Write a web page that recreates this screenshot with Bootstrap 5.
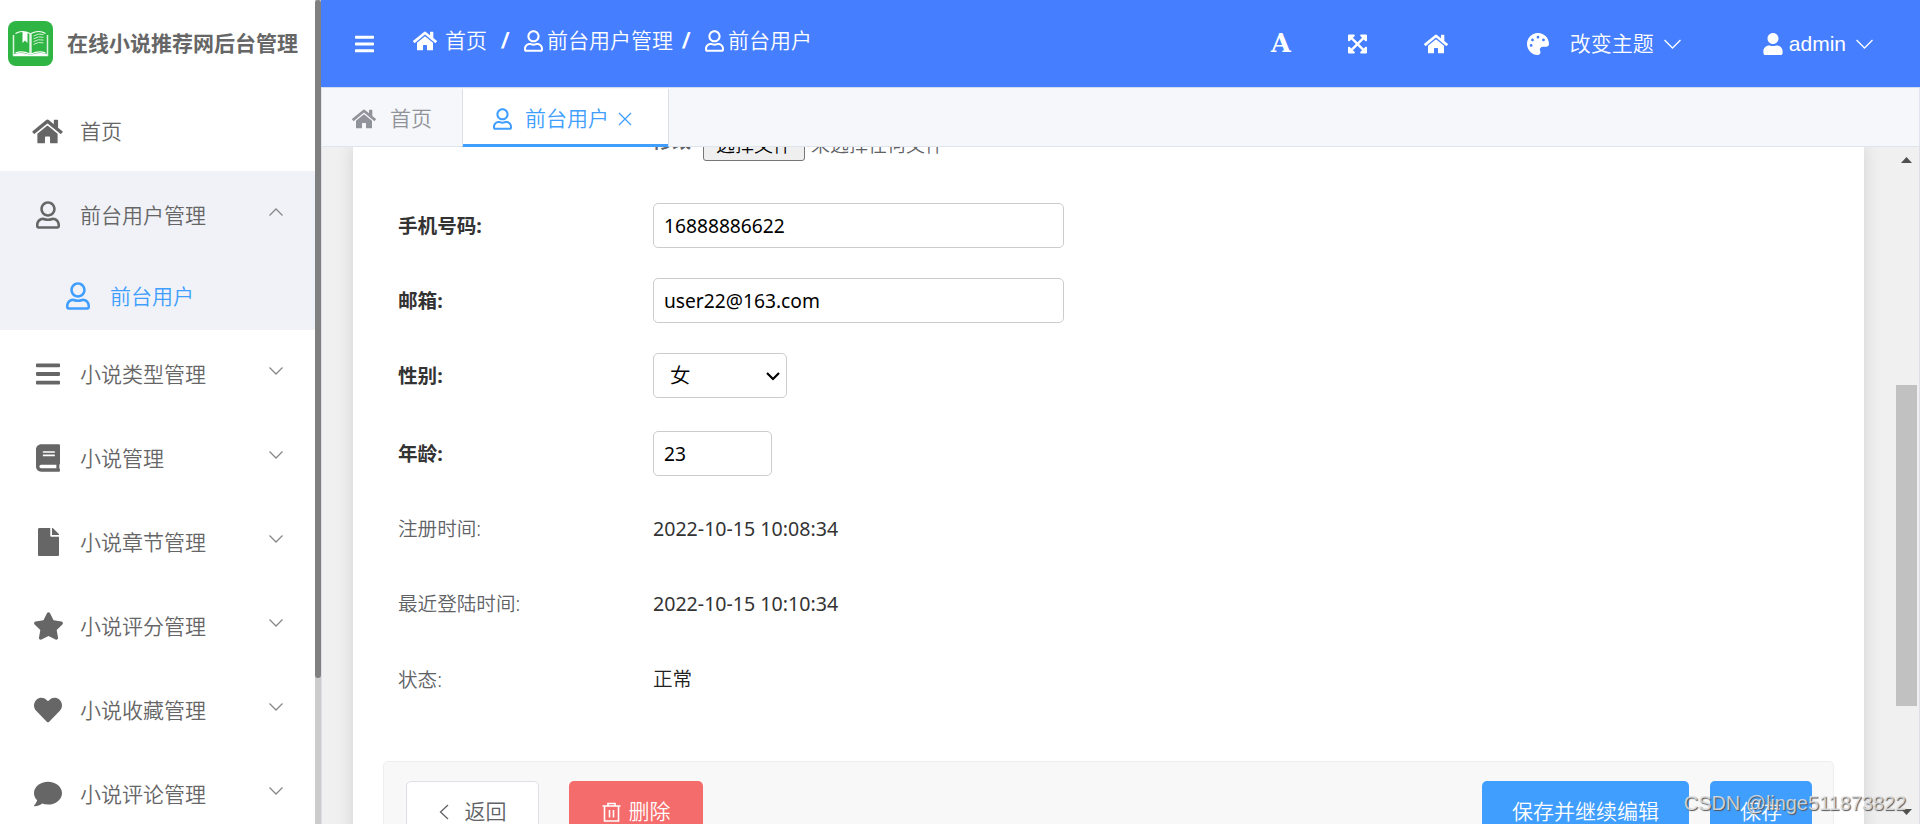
<!DOCTYPE html>
<html lang="zh-CN">
<head>
    <meta charset="UTF-8">
    <meta name="viewport" content="width=device-width, initial-scale=1">
    <title>在线小说推荐网后台管理</title>
    <link href="https://cdn.jsdelivr.net/npm/bootstrap@5.3.0/dist/css/bootstrap.min.css" rel="stylesheet">
    <style>
        body {
            font-family: "Noto Sans", "Noto Sans CJK SC", sans-serif;
            font-size: 21px;
            font-weight: 350;
            line-height: 1;
            color: #606266;
            background: #fff;
        }
        svg { display: block; flex: none; fill: currentColor; }
        .line-icon { fill: none; stroke: currentColor; stroke-width: 1.3; }

        /* Menú lateral */
        .sidebar { width: 315px; color: #666; }
        .brand { height: 87px; padding-left: 8px; gap: 14px; font-weight: 700; }
        .menu-item { height: 84px; padding: 4px 32px 0 32px; }
        .menu-item .menu-icon { width: 32px; margin-top: 0; margin-right: 16px; }
        .menu-item .line-icon { margin-top: -6px; color: #888; }
        .menu-open { background: #f0f2f7; }
        .menu-sub { height: 75px; padding: 7px 0 0 62px; color: #409eff; }
        .side-scroll { width: 6px; background: #ccc; }
        .side-thumb { height: 678px; background: #808080; border-radius: 3px; }

        /* Barra superior */
        .topbar { height: 87px; background: #457eff; color: #fff; padding: 0 47px 0 34px; }
        .crumbs { padding-bottom: 6px; margin-left: 39px; }
        .crumbs b { font-family: "Liberation Sans", sans-serif; font-weight: 700; font-size: 22px; width: 12px; text-align: center; transform: skewX(-10deg); }
        .crumb-first { margin: 0 13px 0 12px; }
        .crumb-next { margin: 0 13px 0 7px; }
        .letter-icon { font: 700 25.5px/1 "DejaVu Serif", serif; }
        .admin-name { font-family: "Liberation Sans", sans-serif; font-weight: 400; }
        .tool-gap { margin-left: 57px; }
        .theme-icon { margin: 0 21px 0 79px; }
        .caret { margin-left: 10px; }
        .admin-icon { margin: 0 6px 0 82px; }

        /* Pestañas */
        .tabbar { height: 60px; background: #f5f7fa; border: 1px solid #dfe4ed; border-top-color: #d3dcef; }
        .tab-home { width: 140px; padding: 3px 0 0 30px; gap: 14px; color: #909399; }
        .tab-active { width: 207px; padding: 2px 0 0 30px; background: #fff; color: #409eff; border: 1px solid #dcdfe6; border-width: 0 1px; box-shadow: inset 0 -2px #409eff; margin-bottom: -1px; border-bottom: 1px solid #409eff; margin-top: 1px; }
        .tab-active span { margin: 0 6px 0 13px; }

        /* Contenido */
        .content-area { background: #f0f0f0; border: 1px solid #dcdfe6; border-width: 0 1px; padding: 0 31px 0 31px; }
        .panel { width: 1511px; background: #fff; box-shadow: 0 0 16px rgba(0, 0, 0, .13); }
        .form-body { padding: 0 0 0 45px; font-size: 19.6px; }
        .form-line { height: 45px; margin-bottom: 30px; }
        .form-line label { width: 255px; padding-top: 1px; }
        .form-line label.strong { font-weight: 700; color: #333; }
        .form-line span { color: #333; font-weight: 400; }
        .form-line .form-control, .form-line .form-select {
            height: 45px; border: 1px solid #ccc; border-radius: 5px; font-size: 19.2px; color: #000; padding: 0 10px; font-weight: 400;
        }
        .form-line .w-text { width: 411px; }
        .form-line .w-age { width: 119px; }
        .form-line .form-select {
            width: 134px; padding-left: 16px; font-size: 20.5px; font-weight: 350;
            background-image: url("data:image/svg+xml,%3csvg xmlns='http://www.w3.org/2000/svg' viewBox='0 0 16 10'%3e%3cpath d='M2 2l6 6 6-6' fill='none' stroke='%23000' stroke-width='2.2'/%3e%3c/svg%3e");
            background-size: 16px 10px; background-position: right 5px center;
        }
        .form-line.mb-sex { margin-bottom: 33px; }
        .form-line.line-status { height: 105px; padding-top: 13px; margin-bottom: 0; }
        .form-line .state-text { font-weight: 350; color: #222; }
        .file-line { height: 14px; padding-left: 255px; margin-bottom: 42px; overflow: hidden; font-size: 19px; }
        .file-btn { height: 32px; width: 102px; line-height: 31px; background: #efefef; border: 1px solid #767676; border-radius: 3px; color: #000; text-align: center; }
        .file-edit { width: 50px; padding-bottom: 10px; flex: none; font-weight: 700; }
        .file-none { margin-left: 6px; padding-bottom: 6px; }
        .actions { width: 1451px; height: 100px; margin-left: 30px; background: #f8f8f8; border: 1px solid #eee; border-radius: 5px; padding: 19px 21px 0 22px; }
        .actions .btn { height: 61px; border-radius: 5px; font-size: 21px; font-weight: 350; line-height: 1; padding: 0; }
        .btn-back { width: 133px; background: #fff; border-color: #dcdfe6; color: #606266; }
        .btn-del { width: 134px; background: #f56c6c; color: #fff; margin-left: 30px; }
        .btn-save { background: #409eff; color: #fff; }
        .w-continue { width: 207px; margin-right: 21px; }
        .w-save { width: 102px; }

        /* Barra de desplazamiento y marca de agua, por encima del contenido */
        .page-scroll { position: absolute; top: 147px; right: 3px; bottom: 0; width: 21px; padding: 10px 0 9px; color: #505050; }
        .page-thumb { width: 21px; height: 321px; margin-top: 222px; background: #c1c1c1; }
        .credit { position: absolute; right: 14px; bottom: 10px; font: 400 19.9px/1 "Liberation Sans", sans-serif; color: rgba(225, 225, 225, .85); text-shadow: 1px 1px 1px #555; white-space: nowrap; }
    </style>
</head>
<body class="vh-100 overflow-hidden position-relative">

<svg width="0" height="0" class="position-absolute">
    <symbol id="home" viewBox="0 0 576 512"><path d="M280.37 148.26L96 300.11V464a16 16 0 0 0 16 16l112.06-.29a16 16 0 0 0 15.92-16V368a16 16 0 0 1 16-16h64a16 16 0 0 1 16 16v95.64a16 16 0 0 0 16 16.05L464 480a16 16 0 0 0 16-16V300L295.67 148.26a12.19 12.19 0 0 0-15.3 0zM571.6 251.47L488 182.56V44.05a12 12 0 0 0-12-12h-56a12 12 0 0 0-12 12v72.61L318.47 43a48 48 0 0 0-61 0L4.34 251.47a12 12 0 0 0-1.6 16.9l25.5 31A12 12 0 0 0 45.15 301l235.22-193.74a12.19 12.19 0 0 1 15.3 0L530.9 301a12 12 0 0 0 16.9-1.6l25.5-31a12 12 0 0 0-1.7-16.93z"/></symbol>
    <symbol id="user" viewBox="0 0 448 512"><path d="M313.6 304c-28.7 0-42.5 16-89.6 16-47.1 0-60.8-16-89.6-16C60.2 304 0 364.2 0 438.4V464c0 26.5 21.5 48 48 48h352c26.5 0 48-21.5 48-48v-25.6c0-74.2-60.2-134.4-134.4-134.4zM400 464H48v-25.6c0-47.6 38.8-86.4 86.4-86.4 14.6 0 38.3 16 89.6 16 51.7 0 74.9-16 89.6-16 47.6 0 86.4 38.8 86.4 86.4V464zM224 288c79.5 0 144-64.5 144-144S303.5 0 224 0 80 64.5 80 144s64.5 144 144 144zm0-240c52.9 0 96 43.1 96 96s-43.1 96-96 96-96-43.1-96-96 43.1-96 96-96z"/></symbol>
    <symbol id="user-solid" viewBox="0 0 448 512"><path d="M224 256c70.7 0 128-57.3 128-128S294.7 0 224 0 96 57.3 96 128s57.3 128 128 128zm89.6 32h-16.7c-22.2 10.2-46.9 16-72.9 16s-50.6-5.8-72.9-16h-16.7C60.2 288 0 348.2 0 422.4V464c0 26.5 21.5 48 48 48h352c26.5 0 48-21.5 48-48v-41.6c0-74.2-60.2-134.4-134.4-134.4z"/></symbol>
    <symbol id="bars" viewBox="0 0 448 512"><path d="M16 132h416c8.837 0 16-7.163 16-16V76c0-8.837-7.163-16-16-16H16C7.163 60 0 67.163 0 76v40c0 8.837 7.163 16 16 16zm0 160h416c8.837 0 16-7.163 16-16v-40c0-8.837-7.163-16-16-16H16c-8.837 0-16 7.163-16 16v40c0 8.837 7.163 16 16 16zm0 160h416c8.837 0 16-7.163 16-16v-40c0-8.837-7.163-16-16-16H16c-8.837 0-16 7.163-16 16v40c0 8.837 7.163 16 16 16z"/></symbol>
    <symbol id="book" viewBox="0 0 448 512"><path d="M448 360V24c0-13.3-10.7-24-24-24H96C43 0 0 43 0 96v320c0 53 43 96 96 96h328c13.3 0 24-10.7 24-24v-16c0-7.5-3.5-14.3-8.9-18.7-4.2-15.4-4.2-59.3 0-74.7 5.4-4.3 8.9-11.1 8.9-18.6zM128 134c0-3.3 2.7-6 6-6h212c3.3 0 6 2.7 6 6v20c0 3.3-2.7 6-6 6H134c-3.3 0-6-2.7-6-6v-20zm0 64c0-3.3 2.7-6 6-6h212c3.3 0 6 2.7 6 6v20c0 3.3-2.7 6-6 6H134c-3.3 0-6-2.7-6-6v-20zm253.4 250H96c-17.7 0-32-14.3-32-32 0-17.6 14.4-32 32-32h285.4c-1.9 17.1-1.9 46.9 0 64z"/></symbol>
    <symbol id="file" viewBox="0 0 384 512"><path d="M224 136V0H24C10.7 0 0 10.7 0 24v464c0 13.3 10.7 24 24 24h336c13.3 0 24-10.7 24-24V160H248c-13.2 0-24-10.8-24-24zm160-14.1v6.1H256V0h6.1c6.4 0 12.5 2.5 17 7l97.9 98c4.5 4.5 7 10.6 7 16.9z"/></symbol>
    <symbol id="star" viewBox="0 0 576 512"><path d="M259.3 17.8L194 150.2 47.9 171.5c-26.2 3.8-36.7 36.1-17.7 54.6l105.7 103-25 145.5c-4.5 26.3 23.2 46 46.4 33.7L288 439.6l130.7 68.7c23.2 12.2 50.9-7.4 46.4-33.7l-25-145.5 105.7-103c19-18.5 8.5-50.8-17.7-54.6L382 150.2 316.7 17.8c-11.7-23.6-45.6-23.9-57.4 0z"/></symbol>
    <symbol id="heart" viewBox="0 0 512 512"><path d="M462.3 62.6C407.5 15.9 326 24.3 275.7 76.2L256 96.5l-19.7-20.3C186.1 24.3 104.5 15.9 49.7 62.6c-62.8 53.6-66.1 149.8-9.9 207.9l193.5 199.8c12.5 12.9 32.8 12.9 45.3 0l193.5-199.8c56.3-58.1 53-154.3-9.8-207.9z"/></symbol>
    <symbol id="comment" viewBox="0 0 512 512"><path d="M256 32C114.6 32 0 125.1 0 240c0 49.6 21.4 95 57 130.7C44.5 421.1 2.7 466 2.2 466.5c-2.2 2.3-2.8 5.7-1.5 8.7S4.8 480 8 480c66.3 0 116-31.8 140.6-51.4 32.7 12.3 69 19.4 107.4 19.4 141.4 0 256-93.1 256-208S397.4 32 256 32z"/></symbol>
    <symbol id="palette" viewBox="0 0 512 512"><path d="M204.3 5C104.9 24.4 24.8 104.3 5.2 203.4c-37 187 131.7 326.4 258.8 306.7 41.2-6.4 61.4-54.6 42.5-91.7-23.1-45.4 9.9-98.4 60.9-98.4h79.7c35.8 0 64.8-29.6 64.9-65.3C511.5 97.1 368.1-26.9 204.3 5zM96 320c-17.7 0-32-14.3-32-32s14.3-32 32-32 32 14.3 32 32-14.3 32-32 32zm32-128c-17.7 0-32-14.3-32-32s14.3-32 32-32 32 14.3 32 32-14.3 32-32 32zm128-64c-17.7 0-32-14.3-32-32s14.3-32 32-32 32 14.3 32 32-14.3 32-32 32zm128 64c-17.7 0-32-14.3-32-32s14.3-32 32-32 32 14.3 32 32-14.3 32-32 32z"/></symbol>
    <symbol id="expand" viewBox="0 0 448 512"><path d="M448 344v112a23.94 23.94 0 0 1-24 24H312c-21.39 0-32.09-25.9-17-41l36.2-36.2L224 295.6 116.77 402.9 153 439c15.09 15.1 4.39 41-17 41H24a23.94 23.94 0 0 1-24-24V344c0-21.4 25.89-32.1 41-17l36.19 36.2L184.46 256 77.18 148.7 41 185c-15.1 15.1-41 4.4-41-17V56a23.94 23.94 0 0 1 24-24h112c21.39 0 32.09 25.9 17 41l-36.2 36.2L224 216.4l107.23-107.3L295 73c-15.09-15.1-4.39-41 17-41h112a23.94 23.94 0 0 1 24 24v112c0 21.4-25.89 32.1-41 17l-36.19-36.2L263.54 256l107.28 107.3L407 327.1c15.1-15.2 41-4.5 41 16.9z"/></symbol>
</svg>

<div class="d-flex h-100">
    <!-- Menú lateral -->
    <nav class="sidebar flex-shrink-0 overflow-hidden">
        <div class="brand d-flex align-items-center text-nowrap">
            <svg width="45" height="45" viewBox="0 0 45 45">
                <rect width="45" height="45" rx="8" fill="#2fb543"/>
                <path d="M5.500 14v20.500h34V14" fill="none" stroke="#d9f6dd" stroke-width="1.500"/>
                <path d="M7.500 12.500Q14 8.500 22 12.500V33Q14 29.500 7.500 32" fill="none" stroke="#fff" stroke-width="1.200"/>
                <path d="M37.500 32Q31 29.500 23 33V12.500Q31 8.500 37.500 12.500" fill="none" stroke="#fff" stroke-width="1.200"/>
                <path d="M6 33Q14 30.500 22.500 34Q31 30.500 39 33V35H6z" fill="#fff"/>
                <path d="M14.500 11h5v11l-2.500-2.500-2.500 2.500z" fill="#fff"/>
                <path d="M25.500 15q5-3 10-1.500M25.500 17.800q5-3 10-1.500M25.500 20.600q5-3 10-1.500M25.500 23.400q5-3 10-1.500" fill="none" stroke="#c8f0cd"/>
            </svg>
            <span>在线小说推荐网后台管理</span>
        </div>
        <div class="menu-item d-flex align-items-center">
            <div class="menu-icon"><svg width="31" height="27"><use href="#home"/></svg></div>
            <span>首页</span>
        </div>
        <div class="menu-open">
            <div class="menu-item d-flex align-items-center">
                <div class="menu-icon d-flex justify-content-center"><svg width="24" height="28"><use href="#user"/></svg></div>
                <span>前台用户管理</span>
                <svg class="line-icon ms-auto" width="14" height="8"><path d="M.5 7.500 7 1l6.500 6.500"/></svg>
            </div>
            <div class="menu-sub d-flex align-items-center">
                <div class="me-3"><svg class="ms-1" width="24" height="28"><use href="#user"/></svg></div>
                <span class="ms-1">前台用户</span>
            </div>
        </div>
        <div id="menu-list"></div>
    </nav>
    <div class="side-scroll flex-shrink-0"><div class="side-thumb"></div></div>

    <div class="flex-grow-1 d-flex flex-column overflow-hidden">
        <!-- Barra superior -->
        <header class="topbar d-flex align-items-center flex-shrink-0">
            <svg width="19" height="22"><use href="#bars"/></svg>
            <div class="crumbs d-flex align-items-center text-nowrap">
                <svg width="24" height="22" class="me-2"><use href="#home"/></svg>
                <span>首页</span>
                <b class="crumb-first">/</b>
                <svg width="19" height="22" class="me-1"><use href="#user"/></svg>
                <span>前台用户管理</span>
                <b class="crumb-next">/</b>
                <svg width="19" height="22" class="me-1"><use href="#user"/></svg>
                <span>前台用户</span>
            </div>
            <div class="d-flex align-items-center ms-auto text-nowrap">
                <span class="letter-icon">A</span>
                <svg class="tool-gap" width="19" height="22"><use href="#expand"/></svg>
                <svg class="tool-gap" width="24" height="22"><use href="#home"/></svg>
                <svg class="theme-icon" width="22" height="22"><use href="#palette"/></svg>
                <span>改变主题</span>
                <svg class="line-icon caret" width="17" height="10"><path d="M.5 1 8.500 9 16.500 1"/></svg>
                <svg class="admin-icon" width="20" height="22"><use href="#user-solid"/></svg>
                <span class="admin-name">admin</span>
                <svg class="line-icon caret" width="17" height="10"><path d="M.5 1 8.500 9 16.500 1"/></svg>
            </div>
        </header>

        <!-- Pestañas -->
        <div class="tabbar d-flex flex-shrink-0 text-nowrap">
            <div class="tab-home d-flex align-items-center">
                <svg width="24" height="22"><use href="#home"/></svg>
                <span>首页</span>
            </div>
            <div class="tab-active d-flex align-items-center">
                <svg width="19" height="22"><use href="#user"/></svg>
                <span>前台用户</span>
                <svg class="line-icon" width="20" height="14"><path d="M4 1l12 12M16 1L4 13"/></svg>
            </div>
        </div>

        <!-- Formulario -->
        <main class="content-area flex-grow-1 overflow-hidden">
            <div class="panel">
                <div class="form-body">
                    <div class="file-line d-flex align-items-end">
                        <b class="file-edit">修改</b>
                        <div class="file-btn flex-shrink-0">选择文件</div>
                        <span class="file-none">未选择任何文件</span>
                    </div>
                    <div class="form-line d-flex align-items-center">
                        <label class="strong">手机号码:</label>
                        <input type="text" class="form-control w-text" value="16888886622">
                    </div>
                    <div class="form-line d-flex align-items-center">
                        <label class="strong">邮箱:</label>
                        <input type="text" class="form-control w-text" value="user22@163.com">
                    </div>
                    <div class="form-line d-flex align-items-center mb-sex">
                        <label class="strong">性别:</label>
                        <select class="form-select"><option>男</option><option selected>女</option></select>
                    </div>
                    <div class="form-line d-flex align-items-center">
                        <label class="strong">年龄:</label>
                        <input type="text" class="form-control w-age" value="23">
                    </div>
                    <div class="form-line d-flex align-items-center"><label>注册时间:</label><span>2022-10-15 10:08:34</span></div>
                    <div class="form-line d-flex align-items-center"><label>最近登陆时间:</label><span>2022-10-15 10:10:34</span></div>
                    <div class="form-line line-status d-flex align-items-start"><label>状态:</label><span class="state-text">正常</span></div>
                </div>
                <div class="actions d-flex">
                    <button class="btn btn-back d-flex align-items-center justify-content-center">
                        <svg class="line-icon me-3" width="10" height="16"><path d="M9 1 1.500 8 9 15"/></svg>返回
                    </button>
                    <button class="btn btn-del d-flex align-items-center justify-content-center">
                        <svg class="line-icon me-2" width="19" height="20"><path d="M.5 4h18M6 4V1.500h7V4M2.500 4v15h14V4M7.500 8v7.500M11.500 8v7.500" stroke-width="1.600"/></svg>删除
                    </button>
                    <button class="btn btn-save w-continue ms-auto">保存并继续编辑</button>
                    <button class="btn btn-save w-save">保存</button>
                </div>
            </div>
        </main>
    </div>
</div>

<div class="page-scroll d-flex flex-column">
    <svg class="mx-auto" width="11" height="6"><path d="M0 6 5.500 0 11 6z"/></svg>
    <div class="page-thumb"></div>
    <svg class="mx-auto mt-auto" width="11" height="6"><path d="M0 0h11L5.500 6z"/></svg>
</div>
<div class="credit">CSDN @linge511873822</div>

<script>
    const menus = [
        { icon: "bars", w: 24, name: "小说类型管理" },
        { icon: "book", w: 24, name: "小说管理" },
        { icon: "file", w: 21, name: "小说章节管理" },
        { icon: "star", w: 31, name: "小说评分管理" },
        { icon: "heart", w: 28, name: "小说收藏管理" },
        { icon: "comment", w: 28, name: "小说评论管理" }
    ];

    // Renderizar el resto del menú
    document.getElementById("menu-list").innerHTML = menus.map(menu => `
        <div class="menu-item d-flex align-items-center">
            <div class="menu-icon d-flex justify-content-center"><svg width="${menu.w}" height="28"><use href="#${menu.icon}"/></svg></div>
            <span>${menu.name}</span>
            <svg class="line-icon ms-auto" width="14" height="8"><path d="M.5 .5 7 7 13.500 .5"/></svg>
        </div>`).join("");
</script>
<script src="https://cdn.jsdelivr.net/npm/bootstrap@5.3.0/dist/js/bootstrap.bundle.min.js"></script>
</body>
</html>
